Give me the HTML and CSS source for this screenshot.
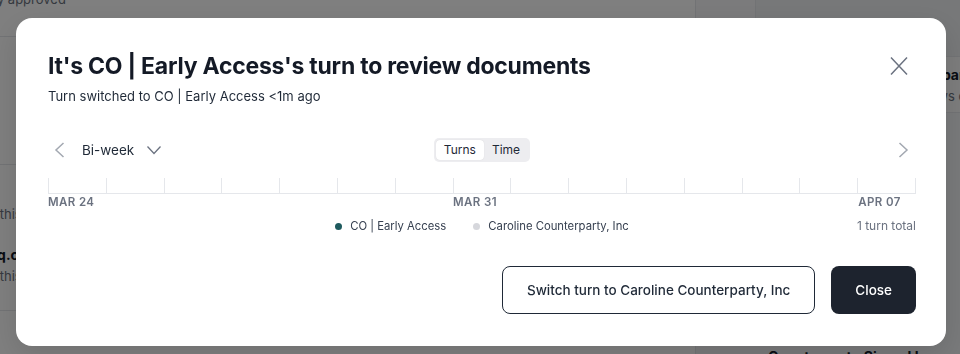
FILE: index.html
```html
<!DOCTYPE html>
<html lang="en">
<head>
<meta charset="utf-8">
<title>Turn review</title>
<link rel="stylesheet" href="styles.css">
</head>
<body>
<div class="page">
  <div class="main">
    <div class="list-item first"><span class="muted">Automatically approved</span></div>
    <div class="list-gap"></div>
    <div class="list-item tall">
      <span class="muted">Changes made to this</span>
    </div>
    <div class="list-item tall2">
      <strong class="strong">acme.redline@inq.co</strong>
      <span class="muted">Changes made to this</span>
    </div>
  </div>
  <aside class="side">
    <div class="side-top">
      <div class="side-tab"></div>
      <div class="side-tools">
        <svg width="16" height="36" viewBox="0 0 16 36" aria-hidden="true"><g stroke="#3a3a3a" stroke-width="1"><path d="M2 3.5h14M2 11.5h14M2 19.5h14M2 26.5h14M2 32.5h14"/></g></svg>
      </div>
    </div>
    <div class="side-card">
      <strong class="strong">Caroline Counterparty</strong>
      <span class="muted side-sub">Reviews documents</span>
    </div>
    <div class="side-foot"><strong class="strong">Counterparty Signed by</strong></div>
  </aside>
</div>

<div class="backdrop">
  <div class="modal" role="dialog" aria-labelledby="mtitle">
    <div class="modal-head">
      <div>
        <h1 id="mtitle" class="title">It's CO | Early Access's turn to review documents</h1>
        <p class="subtitle">Turn switched to CO | Early Access &lt;1m ago</p>
      </div>
      <button class="icon-btn close-x" aria-label="Close">
        <svg width="24" height="24" viewBox="0 0 24 24"><path d="M4 3.5L20 20.5M20 3.5L4 20.5" stroke="#6b7280" stroke-width="1.5" fill="none"/></svg>
      </button>
    </div>

    <div class="controls">
      <div class="ctrl-left">
        <button class="icon-btn" aria-label="Previous">
          <svg width="24" height="24" viewBox="0 0 24 24"><path d="M15.5 5L8 12l7.5 7" stroke="#a3a8b1" stroke-width="1.5" fill="none"/></svg>
        </button>
        <button class="period">Bi-week
          <svg width="16" height="16" viewBox="0 0 16 16"><path d="M1.5 4.5l6.5 7 6.5-7" stroke="#6b7280" stroke-width="1.3" fill="none"/></svg>
        </button>
      </div>
      <div class="segmented">
        <button class="seg active">Turns</button>
        <button class="seg">Time</button>
      </div>
      <div class="ctrl-right">
        <button class="icon-btn" aria-label="Next">
          <svg width="24" height="24" viewBox="0 0 24 24"><path d="M8.5 5L16 12l-7.5 7" stroke="#a3a8b1" stroke-width="1.5" fill="none"/></svg>
        </button>
      </div>
    </div>

    <div class="axis">
      <span></span><span></span><span></span><span></span><span></span>
      <span></span><span></span><span></span><span></span><span></span>
      <span></span><span></span><span></span><span></span><span></span>
    </div>
    <div class="axis-labels">
      <span class="lbl l1">MAR 24</span>
      <span class="lbl l2">MAR 31</span>
      <span class="lbl l3">APR 07</span>
    </div>

    <div class="legend-row">
      <div></div>
      <div class="legend">
        <span class="key"><i class="dot teal"></i>CO | Early Access</span>
        <span class="key"><i class="dot grey"></i>Caroline Counterparty, Inc</span>
      </div>
      <div class="total">1 turn total</div>
    </div>

    <div class="actions">
      <button class="btn outline">Switch turn to Caroline Counterparty, Inc</button>
      <button class="btn solid">Close</button>
    </div>
  </div>
</div>
</body>
</html>
```

FILE: styles.css
```css
* { box-sizing: border-box; }
html, body { margin: 0; padding: 0; }
body {
  width: 960px;
  height: 354px;
  overflow: hidden;
  font-family: Inter, "Noto Sans", "Liberation Sans", sans-serif;
  color: #111827;
  background: #ffffff;
}
button {
  font-family: inherit;
  border: 0;
  background: none;
  padding: 0;
  margin: 0;
  cursor: pointer;
}

/* background page */
.page {
  display: flex;
  height: 354px;
  overflow: hidden;
}
.main {
  width: 695px;
  flex: none;
  display: flex;
  flex-direction: column;
  font-size: 13px;
  line-height: 16px;
}
.muted { color: #6b7280; display: block; }
.strong { color: #111827; display: block; font-weight: 700; font-size: 14px; line-height: 17px; }
.list-item.first {
  height: 46px;
  margin-top: -9px;
  border-bottom: 1px solid #e5e7eb;
  white-space: nowrap;
  display: flex;
  align-items: flex-start;
  margin-left: -79px;
}
.list-gap {
  height: 128px;
  border-bottom: 1px solid #e5e7eb;
}
.list-item.tall {
  height: 57px;
  display: flex;
  align-items: flex-end;
  margin-left: -112px;
  white-space: nowrap;
}
.list-item.tall2 {
  margin-left: -112px;
  padding-top: 24px;
  white-space: nowrap;
  display: flex;
  flex-direction: column;
  gap: 5px;
}
.list-item.tall2 .strong { margin-left: -7px; }
.list-item.tall2::after {
  content: "";
  display: block;
  margin-top: 21px;
  margin-left: 112px;
  border-bottom: 1px solid #e5e7eb;
}

.side {
  flex: 1;
  background: #f3f4f6;
  border-left: 1px solid #e5e7eb;
  display: flex;
  flex-direction: column;
  white-space: nowrap;
}
.side-top {
  height: 57px;
  display: flex;
  border-bottom: 1px solid #e5e7eb;
  background: #eef0f2;
}
.side-tab {
  width: 60px;
  border-right: 1px solid #e5e7eb;
  background: #f6f7f8;
}
.side-tools {
  flex: 1;
  display: flex;
  justify-content: flex-end;
  align-items: flex-start;
}
.side-card {
  padding: 9px 0 0 130px;
  height: 56px;
  border-bottom: 1px solid #e5e7eb;
  background: #fafafa;
  font-size: 13px;
  line-height: 16px;
  display: flex;
  flex-direction: column;
  gap: 5px;
}
.side-sub { margin-left: 78px; }
.side-foot {
  margin-top: auto;
  padding-left: 72px;
  margin-bottom: -11px;
  font-size: 13px;
}

/* modal overlay */
.backdrop {
  position: fixed;
  inset: 0;
  background: rgba(0, 0, 0, 0.5);
  display: flex;
  align-items: flex-start;
  justify-content: flex-start;
  padding: 18px 14px 0 16px;
}
.modal {
  width: 930px;
  height: 328px;
  background: #ffffff;
  border-radius: 16px;
  padding: 32px 30px 32px 32px;
  box-shadow: 0 10px 30px rgba(0,0,0,0.12);
  display: flex;
  flex-direction: column;
}
.modal-head {
  display: flex;
  justify-content: space-between;
  align-items: flex-start;
}
.title {
  margin: 0;
  font-size: 23px;
  line-height: 32px;
  font-weight: 700;
  color: #141a26;
  letter-spacing: -0.23px;
}
.subtitle {
  margin: 4px 0 0;
  font-size: 13px;
  line-height: 20px;
  color: #1f2937;
}
.icon-btn {
  width: 24px;
  height: 24px;
  display: flex;
  align-items: center;
  justify-content: center;
}
.close-x {
  margin-top: 4px;
  margin-right: 5px;
}

.controls {
  margin-top: 32px;
  display: grid;
  grid-template-columns: 1fr auto 1fr;
  align-items: center;
  height: 24px;
}
.ctrl-left {
  display: flex;
  align-items: center;
  gap: 10px;
}
.period {
  display: flex;
  align-items: center;
  gap: 12px;
  font-size: 13.5px;
  line-height: 20px;
  color: #1f2937;
}
.ctrl-right {
  display: flex;
  justify-content: flex-end;
  padding-right: 1px;
}
.segmented {
  display: flex;
  background: #ededf0;
  border-radius: 5px;
  padding: 2px;
  height: 24px;
}
.seg {
  font-size: 12px;
  line-height: 16px;
  padding: 2px 8px;
  border-radius: 4px;
  color: #1f2937;
}
.seg.active {
  background: #ffffff;
  box-shadow: 0 0 1px rgba(0,0,0,0.15);
}

.axis {
  margin-top: 16px;
  display: grid;
  grid-template-columns: repeat(15, 1fr);
  height: 16px;
  border-bottom: 1px solid #e5e7eb;
  border-right: 1px solid #e5e7eb;
}
.axis span {
  border-left: 1px solid #e5e7eb;
}
.axis-labels {
  display: grid;
  grid-template-columns: repeat(15, 1fr);
  height: 16px;
}
.lbl {
  font-size: 11.5px;
  line-height: 16px;
  font-weight: 600;
  color: #6b7280;
  letter-spacing: 0.4px;
  white-space: nowrap;
}
.l1 { grid-column: 1; }
.l2 { grid-column: 8; }
.l3 { grid-column: 15; }

.legend-row {
  margin-top: 8px;
  display: grid;
  grid-template-columns: 1fr auto 1fr;
  align-items: center;
  font-size: 11.3px;
  line-height: 16px;
}
.legend {
  display: flex;
  gap: 27px;
  color: #374151;
}
.key {
  display: flex;
  align-items: center;
  gap: 8px;
}
.dot {
  width: 7px;
  height: 7px;
  border-radius: 50%;
  display: block;
}
.dot.teal { background: #1e5a5e; }
.dot.grey { background: #d6d7dc; }
.total {
  justify-self: end;
  color: #6b7280;
  font-size: 12px;
}

.actions {
  margin-top: auto;
  display: flex;
  justify-content: flex-end;
  gap: 16px;
}
.btn {
  height: 48px;
  border-radius: 8px;
  font-size: 13.5px;
  font-weight: 500;
  padding: 0 24px;
}
.btn.outline {
  border: 1px solid #1f2937;
  color: #1f2937;
  background: #ffffff;
}
.btn.solid {
  background: #1d232e;
  color: #ffffff;
}
```
